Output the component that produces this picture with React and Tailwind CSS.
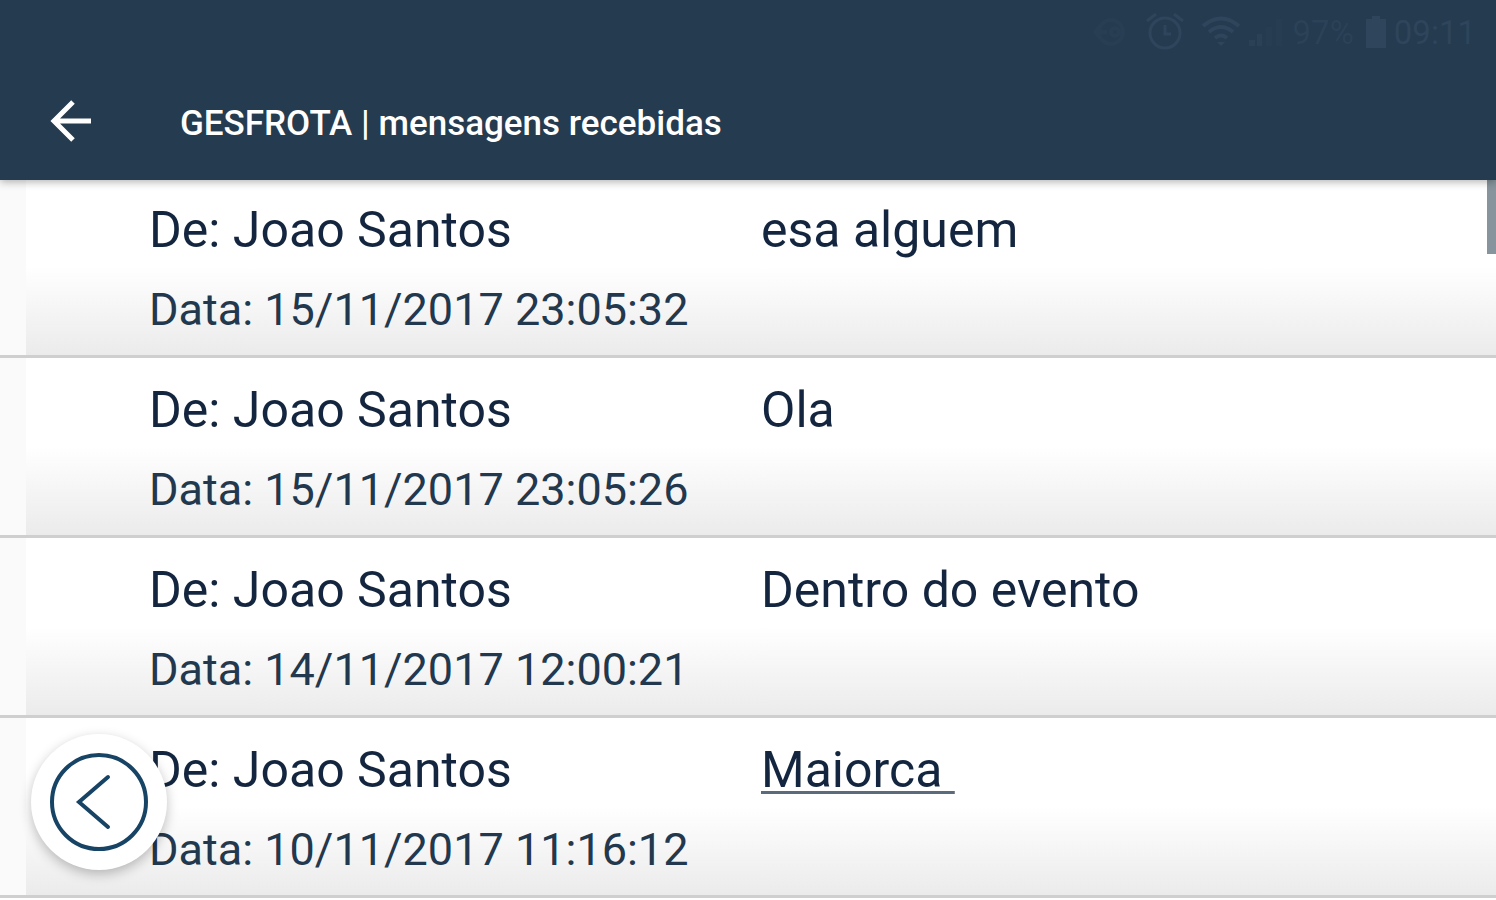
const messages = [
  { id: 1, from: "Joao Santos", date: "15/11/2017 23:05:32", text: "esa alguem" },
  { id: 2, from: "Joao Santos", date: "15/11/2017 23:05:26", text: "Ola" },
  {
    id: 3,
    from: "Joao Santos",
    date: "14/11/2017 12:00:21",
    text: "Dentro do evento",
  },
  {
    id: 4,
    from: "Joao Santos",
    date: "10/11/2017 11:16:12",
    text: "Maiorca ",
    link: true,
  },
];

function StatusBar() {
  return (
    <div className="flex h-16 items-center justify-end pr-5 text-[33px] leading-none text-[#2e455b]">
      <svg
        className="mr-4 h-9 w-9 opacity-30"
        viewBox="0 0 36 36"
        fill="none"
        stroke="currentColor"
        strokeWidth="4"
        aria-hidden="true"
      >
        <circle cx="18" cy="18" r="12" />
        <circle cx="22" cy="18" r="4" />
        <path d="M2 18h12M8 11l-6 7 6 7" />
      </svg>
      <svg
        className="mr-4 h-10 w-10"
        viewBox="0 0 40 40"
        fill="none"
        stroke="currentColor"
        strokeWidth="3"
        aria-hidden="true"
      >
        <circle cx="20" cy="21" r="15" />
        <path d="M20 13v9h6M2 9l9-7M38 9l-9-7" />
      </svg>
      <svg
        className="mr-2 h-8 w-10"
        viewBox="0 0 40 32"
        fill="none"
        stroke="currentColor"
        strokeWidth="4"
        aria-hidden="true"
      >
        <path d="M2 10Q20-5 38 10M8 16q12-10 24 0M14 22q6-5 12 0" />
        <path d="M16 26h8l-4 4z" fill="currentColor" stroke="none" />
      </svg>
      <svg
        className="mr-2 h-8 w-9 opacity-60"
        viewBox="0 0 36 32"
        fill="currentColor"
        aria-hidden="true"
      >
        <path d="M0 24h6v6H0zM8 18h5v12H8z" />
        <path d="M17 11h6v19h-6zM27 3h6v27h-6z" opacity=".4" />
      </svg>
      <span className="mr-3 opacity-70">97%</span>
      <svg
        className="mr-2 h-8 w-5"
        viewBox="0 0 20 32"
        fill="currentColor"
        aria-hidden="true"
      >
        <path d="M6 0h8v3h6v29H0V3h6z" />
      </svg>
      <span>09:11</span>
    </div>
  );
}

function MessageRow({ message }) {
  return (
    <li className="flex h-[180px] border-b-3 border-[#cfcfcf] bg-[#fafafa] pl-[26px]">
      <div className="grid flex-1 grid-cols-[612px_1fr] bg-linear-to-b from-white from-50% to-[#ebebeb] pt-[22px] pl-[123px]">
        <div>
          <p className="text-[50px] leading-[60px]">De: {message.from}</p>
          <p className="mt-5 text-[45px] leading-[60px] text-[#22384e]">
            Data: {message.date}
          </p>
        </div>
        <p className="text-[50px] leading-[60px] whitespace-pre">
          {message.link ? (
            <a
              href="#maiorca"
              className="underline decoration-[#5b6b7c] decoration-3 underline-offset-4"
            >
              {message.text}
            </a>
          ) : (
            message.text
          )}
        </p>
      </div>
    </li>
  );
}

export default function App() {
  return (
    <div className="relative h-screen overflow-hidden bg-white font-[Roboto,sans-serif] text-[#14263f]">
      <header className="relative z-10 h-[180px] bg-[#253b50] text-white shadow-[0_2px_8px_rgba(0,0,0,0.3)]">
        <StatusBar />
        <div className="flex h-[114px] items-center pl-[50px]">
          <button type="button" aria-label="Voltar">
            <svg
              className="h-[42px] w-[42px]"
              viewBox="0 0 42 42"
              fill="none"
              stroke="currentColor"
              strokeWidth="5"
              aria-hidden="true"
            >
              <path d="M41 21H4M23 2L4 21l19 19" />
            </svg>
          </button>
          <h1 className="ml-[88px] pt-1 text-[35px] leading-none font-medium">
            GESFROTA | mensagens recebidas
          </h1>
        </div>
      </header>

      {/* first row slides slightly under the header */}
      <ul className="-mt-[2px]">
        {messages.map((message) => (
          <MessageRow key={message.id} message={message} />
        ))}
      </ul>

      <div className="absolute top-[180px] right-0 h-[74px] w-[9px] bg-[#87949d]" />

      <button
        type="button"
        aria-label="Anterior"
        className="absolute bottom-[30px] left-[31px] flex h-[136px] w-[136px] items-center justify-center rounded-full bg-white shadow-[0_4px_12px_rgba(0,0,0,0.25)]"
      >
        <svg
          className="h-[100px] w-[100px] text-[#174365]"
          viewBox="0 0 100 100"
          fill="none"
          stroke="currentColor"
          strokeWidth="4"
          aria-hidden="true"
        >
          <circle cx="50" cy="50" r="47" />
          <path d="M59 25L30 50l29 25" strokeLinecap="round" />
        </svg>
      </button>
    </div>
  );
}
